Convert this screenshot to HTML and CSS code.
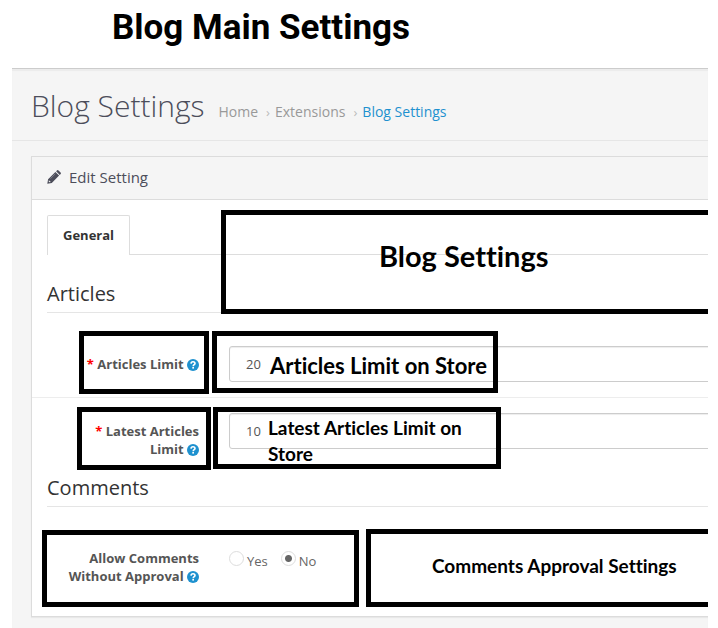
FILE: index.html
```html
<!DOCTYPE html>
<html lang="en">
<head>
    <meta charset="UTF-8">
    <meta name="viewport" content="width=device-width, initial-scale=1.0">
    <title>Blog Main Settings</title>
    <link rel="stylesheet" href="styles.css">
</head>
<body>
    <svg class="sprite" aria-hidden="true">
        <symbol id="icon-help" viewBox="0 0 12 12">
            <circle cx="6" cy="6" r="6" fill="#1e91cf"/>
            <path d="M4 4.600C4.100 3.300 5 2.800 6 2.800c1.200 0 2 .7 2 1.700C8 5.700 6.200 5.800 6.200 7.200" fill="none" stroke="#fff" stroke-width="1.600"/>
            <rect x="5.300" y="8" width="1.700" height="1.600" fill="#fff"/>
        </symbol>
    </svg>

    <h1 class="doc-title">Blog Main Settings</h1>

    <div class="guide">
        <div class="page-header">
            <h2 class="page-title">Blog Settings</h2>
            <nav class="breadcrumb">
                <a href="#">Home</a>
                <span class="sep">›</span>
                <a href="#">Extensions</a>
                <span class="sep">›</span>
                <a href="#" class="current">Blog Settings</a>
            </nav>
        </div>

        <div class="panel">
            <div class="panel-heading">
                <svg class="icon-pencil" viewBox="0 0 14 14" aria-hidden="true">
                    <path d="M0.300 13.700l0.800-4.500L8.400 1.900l3.700 3.700L4.800 12.900z M9.100 1.200l0.800-.8q.8-.7 1.600 0l2.100 2.100q.7.800 0 1.600l-.8.8z" fill="#4c4d5a"/>
                    <path d="M1.900 10.200l1.900 1.900-1.200.2-.9-.9z" fill="#f5f5f5"/>
                    <path d="M3.400 8.700L8.300 3.800" stroke="#b0b0b8" stroke-width="0.500"/>
                </svg>
                <h3>Edit Setting</h3>
            </div>
            <div class="panel-body">
                <div class="tabs">
                    <a href="#general" class="tab">General</a>
                </div>

                <form id="general">
                    <h4 class="legend">Articles</h4>
                    <div class="form-group">
                        <label class="control-label" for="articles-limit"><span class="required">*</span> Articles Limit <svg class="icon-help"><use href="#icon-help"/></svg></label>
                        <input type="text" class="form-control" id="articles-limit" value="20">
                    </div>
                    <div class="form-group">
                        <label class="control-label" for="latest-limit"><span class="required">*</span> Latest Articles Limit <svg class="icon-help"><use href="#icon-help"/></svg></label>
                        <input type="text" class="form-control" id="latest-limit" value="10">
                    </div>

                    <h4 class="legend">Comments</h4>
                    <div class="form-group" role="radiogroup" aria-labelledby="approval-label">
                        <div class="control-label" id="approval-label">Allow Comments Without Approval <svg class="icon-help"><use href="#icon-help"/></svg></div>
                        <div class="radios">
                            <label class="radio"><input type="radio" name="approval" value="1"><span>Yes</span></label>
                            <label class="radio"><input type="radio" name="approval" value="0" checked><span>No</span></label>
                        </div>
                    </div>
                </form>
            </div>
        </div>

        <!-- callouts over the form -->
        <div class="callout callout-settings">Blog Settings</div>
        <div class="callout callout-articles-label"></div>
        <div class="callout callout-articles">Articles Limit on Store</div>
        <div class="callout callout-latest-label"></div>
        <div class="callout callout-latest">Latest Articles Limit on Store</div>
        <div class="callout callout-approval-field"></div>
        <div class="callout callout-approval">Comments Approval Settings</div>
    </div>
</body>
</html>
```

FILE: styles.css
```css
* {
    margin: 0;
    padding: 0;
    box-sizing: border-box;
}

body {
    font-family: 'Open Sans', 'Noto Sans', sans-serif;
    font-size: 13px;
    line-height: 18px;
    color: #666;
    background: #fff;
}

a {
    text-decoration: none;
}

.sprite {
    display: none;
}

.doc-title {
    padding: 6px 112px 18px;
    font-family: Roboto, sans-serif;
    font-size: 35px;
    font-weight: 700;
    line-height: 44px;
    color: #000;
    white-space: nowrap;
}

/* guide */
.guide {
    position: relative;
    margin: 0 10px 0 12px;
    padding-bottom: 12px;
    overflow: hidden;
    background: #f5f5f5;
    border-top: 1px solid #ccc;
    box-shadow: inset 0 2px 1px #ececec;
}

.page-header {
    display: flex;
    align-items: baseline;
    gap: 14px;
    height: 72px;
    padding: 16px 19px 0;
    border-bottom: 1px solid #e6e6e6;
}

.page-title {
    font-size: 30px;
    font-weight: 300;
    line-height: 42px;
    color: #4c4d5a;
    white-space: nowrap;
}

.breadcrumb {
    display: flex;
    align-items: baseline;
    gap: 5px;
    font-size: 14px;
    white-space: nowrap;
}

.breadcrumb a {
    color: #999;
}

.breadcrumb .sep {
    padding-left: 3px;
    font-size: 13px;
    color: #bbb;
}

.breadcrumb .current {
    color: #1e91cf;
}

/* panel */
.panel {
    margin: 15px -20px 0 19px;
    background: #fff;
    border: 1px solid #dcdcdc;
    box-shadow: 0 1px 1px rgba(0, 0, 0, 0.05);
}

.panel-heading {
    display: flex;
    align-items: center;
    gap: 8px;
    height: 43px;
    padding: 0 15px 2px;
    background: #f5f5f5;
    border-bottom: 1px solid #dcdcdc;
}

.panel-heading h3 {
    font-size: 15px;
    font-weight: 400;
    color: #4c4d5a;
}

.icon-pencil {
    width: 14px;
    height: 14px;
}

.panel-body {
    padding: 15px;
}

.tabs {
    display: flex;
    margin-bottom: 25px;
    border-bottom: 1px solid #ddd;
}

.tab {
    margin-bottom: -1px;
    padding: 10px 15px 11px;
    font-weight: 700;
    color: #333;
    background: #fff;
    border: 1px solid #ddd;
    border-bottom: none;
    border-radius: 2px 2px 0 0;
}

.legend {
    margin-bottom: 18px;
    padding-bottom: 5px;
    font-size: 20px;
    font-weight: 400;
    line-height: 27px;
    color: #333;
    border-bottom: 1px solid #e5e5e5;
}

.form-group {
    display: flex;
    align-items: flex-start;
    margin: 0 -15px;
    padding: 15px 0;
}

.form-group + .form-group {
    border-top: 1px solid #ededed;
}

.control-label {
    flex: 0 0 182px;
    padding: 9px 15px 1px 30px;
    font-weight: 700;
    text-align: right;
    color: #555;
}

.required {
    color: #f00;
}

.icon-help {
    width: 12px;
    height: 12px;
    vertical-align: -2px;
}

.form-control {
    flex: 1;
    min-width: 0;
    height: 36px;
    margin: 0 15px;
    padding: 8px 16px;
    font-family: inherit;
    font-size: 13px;
    color: #555;
    background: #fff;
    border: 1px solid #ccc;
    border-radius: 3px;
    box-shadow: inset 0 1px 1px rgba(0, 0, 0, 0.075);
}

.radios {
    display: flex;
    gap: 13px;
    padding: 11px 15px 0;
}

.radio {
    display: flex;
    align-items: flex-start;
    gap: 3px;
}

.radio span {
    padding-top: 1px;
}

.radio input {
    appearance: none;
    width: 15px;
    height: 15px;
    background: #fff;
    border: 1px solid #ddd;
    border-radius: 50%;
}

.radio input:checked {
    background: radial-gradient(circle, #666 3px, #fff 4px);
}

/* callouts */
.callout {
    position: absolute;
    display: flex;
    align-items: center;
    border: 5px solid #000;
    font-family: Lato, sans-serif;
    font-size: 19px;
    font-weight: 700;
    font-variant-ligatures: none;
    line-height: 26px;
    color: #000;
}

.callout-settings {
    top: 141px;
    left: 209px;
    right: -5px;
    height: 104px;
    padding: 0 0 12px 153px;
    font-size: 29px;
}

.callout-articles-label {
    top: 262px;
    left: 67px;
    width: 130px;
    height: 63px;
}

.callout-articles {
    top: 262px;
    left: 200px;
    width: 286px;
    height: 62px;
    padding: 8px 0 0 53px;
    font-size: 22px;
    white-space: nowrap;
}

.callout-latest-label {
    top: 338px;
    left: 65px;
    width: 134px;
    height: 63px;
}

.callout-latest {
    top: 338px;
    left: 201px;
    width: 288px;
    height: 62px;
    padding: 6px 20px 0 50px;
}

.callout-approval-field {
    top: 461px;
    left: 30px;
    width: 317px;
    height: 77px;
}

.callout-approval {
    top: 460px;
    left: 354px;
    right: -5px;
    height: 78px;
    padding: 0 0 4px 61px;
    white-space: nowrap;
}
```
